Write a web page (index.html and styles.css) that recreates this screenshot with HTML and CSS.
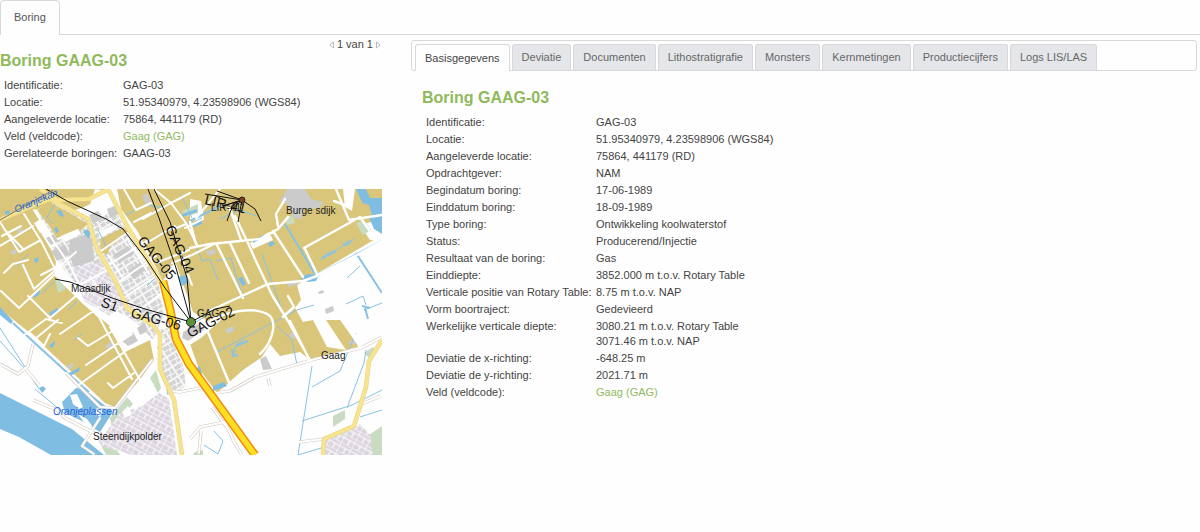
FILE: index.html
```html
<!DOCTYPE html>
<html lang="nl">
<head>
<meta charset="utf-8">
<title>Boring GAAG-03</title>
<link rel="stylesheet" href="styles.css">
</head>
<body>
<nav class="main-tabs"><button class="main-tab" type="button">Boring</button></nav>
<main class="layout">
  <section class="summary">
    <div class="pager">
      <button class="pager-button" type="button" aria-label="Vorige"><svg width="5" height="8" viewBox="0 0 5 8"><path d="M4.5 1v6L.8 4z"/></svg></button>
      <span>1 van 1</span>
      <button class="pager-button" type="button" aria-label="Volgende"><svg width="5" height="8" viewBox="0 0 5 8"><path d="M.5 1v6l3.700-3z"/></svg></button>
    </div>
    <h2 class="title">Boring GAAG-03</h2>
    <table class="facts facts-short">
      <tr><th scope="row">Identificatie:</th><td>GAG-03</td></tr>
      <tr><th scope="row">Locatie:</th><td>51.95340979, 4.23598906 (WGS84)</td></tr>
      <tr><th scope="row">Aangeleverde locatie:</th><td>75864, 441179 (RD)</td></tr>
      <tr><th scope="row">Veld (veldcode):</th><td><a href="#gaag">Gaag (GAG)</a></td></tr>
      <tr><th scope="row">Gerelateerde boringen:</th><td>GAAG-03</td></tr>
    </table>
    <svg class="map" viewBox="0 0 382 266" role="img" aria-label="Kaart van de boring">
      <defs>
        <pattern id="houses" width="13" height="11" patternUnits="userSpaceOnUse" patternTransform="rotate(-32)">
          <rect width="13" height="11" fill="#f6f6f6"/><path d="M1 1h7v4H1zM9 1h3v5H9zM1 6h5v4H1zM7 7h5v3H7z" fill="#d4d4d4"/>
        </pattern>
        <pattern id="suburb" width="12" height="9" patternUnits="userSpaceOnUse" patternTransform="rotate(28)">
          <rect width="12" height="9" fill="#dcd5df"/><path d="M0 0h12M0 0v9M7 4v5M0 4h12" fill="none" stroke="#fff" stroke-width="1.200"/>
        </pattern>
      </defs>
      <rect width="382" height="266" fill="#fefefe"/>
      <!-- greenhouse land -->
      <g fill="#d9c67b">
        <path d="M0 0H106L98 14 68 23 55 13 35 21 56 73 54 86 83 115 110 137 125 163 150 151 154 171 138 193 115 218 105 214 30 144 0 120z"/>
        <path d="M117 0H382V46L313 87 297 96 301 111 295 119 303 133 313 131 327 158 346 161 326 131 340 131 360 157 310 171 300 163 280 167 270 155 262 168 243 181 217 204 199 180 190 155 192 121 174 74 163 92 138 43 121 20z"/>
      </g>
      <g fill="#fefefe">
        <path d="M34 34l7-4 6 6-7 8zM250 54l19-11 4 8-20 9zM343 0h12l-3 22-7-4zM190 10l11 2 3 18-14 2zM360 36l22-6v21h-12z"/>
        <path d="M95 0l13 2 10 19-25 13-20-10 17-9z"/>
      </g>
      <path d="M69 20L96 34 113 18 132 51 158 92 164 125 153 151 136 133 108 117 72 91 60 75 51 55 39 24z" fill="url(#houses)"/>
      <path d="M37 21L50 13 68 23 88 35 80 42 58 51 50 38z" fill="#d9c67b"/>
      <path d="M61 47l17-7 3 5-16 8zM36 36l8-4 5 9 8 16-7 2z" fill="#fefefe"/>
      <path d="M100 50l24-12 5 5-18 14-4 9-6-3z" fill="#d9c67b"/>
      <path d="M98 43l16-7 3 4-17 9zM168 78l8-3 17 48 16 10 14-4-22 20-16 10-9-11 9-18z" fill="#fefefe"/>
      <path d="M72 80L106 72 117 94 124 111 110 127 84 112z" fill="url(#suburb)"/>
      <g fill="#cbcbcb">
        <path d="M70 51l16-6 6 5 2 22-21 6-4-17zM46 49l8-4 4 7-7 4zM51 62l14-6 5 9-13 7zM107 20l10-4 4 8-11 5zM89 26l9-4 5 7-10 6zM113 66l15-9 6 8-15 9zM128 82l14-10 5 8-14 10zM287 0h18l6 10 12 3-3 6-16 1-2 10-8-1-6-13-8-4zM183 143l15-8 7 5-17 12-6-3zM260 170l6-3 6 13-9 1zM137 139l8-5 3 8-8 4zM122 152l11-9 5 9-10 5z"/>
        <path d="M142 7l5-3 4 9-5 3zM17 41l4-2 3 4-5 2zM10 63l5-3 2 4-4 2zM105 157l6-4 3 5-5 3zM67 177l5-3 2 3-5 4zM206 62l8-2 2 4-8 3zM287 95l10-5 1 5-9 3zM225 141l8-4 2 4-7 4zM325 120l8-3 1 5-8 3zM289 145l7-3 2 5-6 3zM318 103l5-2 1 3-5 1zM348 153l8-4 1 5-6 2z"/>
      </g>
      <g fill="#c9dcc1">
        <path d="M55 90l5-1 6 11-8 4zM182 22l16-7v9l-13 4zM285 29l7-3 3 8-8 2zM356 34l8-3 7 10-8 5zM150 189l6-8 5 18-3 5zM110 229l17-21 6 7-13 14-8 9zM165 145l6 2 5 14-5 2zM98 250l12 5 11 11H106zM333 227l12-6v9l-12 8zM369 246l13-9v29h-13zM364 164l9-6 3 4-6 8zM195 263l8-2v5h-10z"/>
      </g>
      <!-- water -->
      <g fill="#80bde2">
        <path d="M0 204L30 219 72 240 104 266H51L19 248 0 240z"/>
        <path d="M62 213l14-14 8 1 29 23-6 9-7 11-18-11-17-8zM39 199l4-2 3 3-4 4zM0 118l13 14-2 3-11-9zM356 0h10l4 9h12v36l-8-5-6-14z"/>
        <path d="M300 89l8-4 11 1-3 6-8 1zM83 43l4-3 4 4-2 6zM178 88l7-2 4 7-7 4zM190 36l12-8v7l-12 4zM182 25l15-5v3l-14 5z"/>
        <path d="M238 90l4-2 4 7-3 2zM49 157l5-5 1 3-3 4zM67 185l13-7-1 4-10 6zM4 23l5-2 1 4-4 1zM34 70l5-2-1 5-3 1zM54 39l3-1 2 5-3 1zM56 22l5-1 3 6-3 1zM49 124l8-5 2 3-8 5zM33 104l7-3-1 5-6 3zM195 180l5-3 4 17-4-2zM213 197l11-4 3 4-14 5zM268 54l5-2 2 3-5 3z"/>
      </g>
      <path d="M374 1h8v8h-9zM362 14l7 2 3 10-7 2z" fill="#d9c67b"/>
      <path d="M70 206l7-1 6 13-4 2-6-5zM78 225l9 5 6 8-7-2zM97 219l6 2-3 7-5-4z" fill="#fff"/>
      <g fill="none" stroke="#89c2e3">
        <path stroke-width="2" d="M13 134L73 189 89 203M285 35l30 50M315 87l67-35M356 64l26 40M190 32l30-15"/>
        <path d="M0 139l39 61M35 200l30 25M0 152l25 28M42 104l13-12M98 41l9 18 6-5M126 26l20-10 18 3M140 58l29-17 20-7M147 97l16-16M193 47l9 25 8-2 8 21M216 72l15-3 12 40M262 65l22 62M320 71l34-21M325 66l8-4M343 55l7-4M360 77l-13 12M346 115l17-8 3 9M364 121l18-7M217 163l80-42 17-5M233 168l3-12 8-5M277 137l15 14 5 25M312 177l-14 89M366 161l-2 13-17 45M302 232l50-16 30-15M360 228l22-7M298 266l30-9M196 133l15-9M169 163l-5 22 4 21M204 256l14 9 5-13-9-10M56 13l-9 15 6 7M9 50l14 10M17 77l11-12M68 121l9-9M74 151l8-6M220 30l19-9 18 6M181 6l11 23M356 144l-16 38-28 16"/>
        <path stroke-width="2" d="M240 106l5 1M253 53l11-6M322 69l14-7M344 57l7-4M232 160l1 7 5-1M236 157l12-5M365 119l3 11M362 117l8 2"/>
      </g>
      <path d="M104 258l-5-5 20-28 23-8 17-13 10 6 8 56h-45z" fill="url(#suburb)"/>
      <path d="M323 266l1-18 18-5 18-8 10 11 3 20z" fill="url(#suburb)"/>
      <path d="M157 158l13-8 13 26 3 21-12 8-10-19zM160 140l11-1 3 16-9-1z" fill="url(#houses)"/>
      <g fill="#fff"><path d="M137 204l9-14 8 5-6 15zM133 206l4-3 4 13-6 5zM122 223l6-6 4 8-7 4z"/></g>
      <!-- minor roads -->
      <path fill="none" stroke="#d0c8be" stroke-width="3.200" stroke-linejoin="round" d="M0 175l18 10 10-8 5-22M25 179l14 17M66 184l34 34 15 1 37-48M216 204l14-2 25-14 60-18 46-11 21-11M170 202l10 1 25-5M100 229l-18 28 12 8M190 250l10-12 25-5M199 264l2-22M225 233l9 20 8 13M299 253l25-3M361 215l20-8M33 211l24 10 8 8 35 18M268 189l2 8M212 218l18 25"/>
      <g fill="none" stroke="#fff" stroke-width="2" stroke-linejoin="round" stroke-linecap="round">
        <path d="M0 175l18 10 10-8 5-22M25 179l14 17M66 184l34 34 15 1 37-48M216 204l14-2 25-14 60-18 46-11 21-11M170 202l10 1 25-5M100 229l-18 28 12 8M190 250l10-12 25-5M199 264l2-22M225 233l9 20 8 13M299 253l25-3M361 215l20-8M33 211l24 10 8 8 35 18M268 189l2 8M212 218l18 25"/>
        <path d="M24 25l17 27 20 40 38 36 33 62M0 33l19 30M4 40l20 21M2 47l19-10M0 57l33-20M19 63l20-11M4 84l9-9 15-4M23 76l11 24 42-37M41 86l21-11M1 102l18 17 35-33M28 107l22 22 27-23M23 147l23-17 16 4M30 144l14 13 6-12M60 145l39-27M80 195l43-31M86 176l46-31M78 149l10 8 36-22M108 194l5 5 21-15M110 138l30 53M35 150l23-19"/>
        <path d="M34 21l20 32 15 22 15 30M58 50l20-9M76 98l35-19M90 88l20 25M101 62l26-18M104 79l44-28M117 94l39-27M125 108l33-22M139 121l23-17M108 66l14 22M127 49l22 36"/>
        <path d="M190 59l20-4 30-3 20-2 18-10 10-12M235 27l13 27 7 16 17 36 16 26 22 39M190 33l6 22M217 56l26 53M230 54l19 40M273 42l30 46M305 60l12 25M304 59l56-31 14 20M317 86l40-20 25-14M209 122l59-27 35-3 14-5M205 136l25 60M229 17l12 34M336 0l13 31 33-5M278 37l-2-12 9-15M348 17l-14-5M205 135c20-13 51-19 65-8 8 10 0 29-10 38M290 132l20 40M320 133l9 18M342 131l19 28M283 128l11-10-6-11M330 129l14-10 16 40" stroke-width="2.400"/>
        <path d="M124 0l12 21 15-7M134 33l17-9M145 55l30-18M134 59l10 13M156 74l33-13M154 0l17 14 15 20 11 22M143 30l28-16 19-10M174 40l12-5M172 74l20-8 22-11M180 64l12 32M220 0l-12 15-12 14M185 39l18-9"/>
      </g>
      <!-- yellow main roads -->
      <g fill="none" stroke-linejoin="round">
        <g stroke="#e6d28c" stroke-width="4.500"><path d="M0 31L37 15 50 10 88 30 97 60 115 91 127 119 153 136 160 146 160 180 174 211 182 266M40 0l17 11 32-1 18-9"/><path d="M108 0l19 37 34 56M382 151l-13 21-3 26-12 39-30 13-1 16"/></g>
        <g stroke="#f7e48e" stroke-width="3.500"><path d="M0 31L37 15 50 10 88 30 97 60 115 91 127 119 153 136 160 146 160 180 174 211 182 266M40 0l17 11 32-1 18-9"/><path d="M108 0l19 37 34 56M382 151l-13 21-3 26-12 39-30 13-1 16"/></g>
        <path stroke="#ef8b16" stroke-width="8.500" d="M163 92l7 28 6 30 13 25 66 91"/>
        <path stroke="#fcdf20" stroke-width="5.500" d="M163 92l7 28 6 30 13 25 66 91"/>
      </g>
      <!-- well paths -->
      <g fill="none" stroke="#111">
        <path d="M46 0L67 12 106 30 123 40 146 70 165 99 191 133M55 90l15 3 45 17 30 10 46 13M148 0l11 29 17 50 15 54M154 0l16 33 17 56 4 44M191 133l24-13 15-3"/>
        <path d="M205 5l37 6 13 9 6 12M217 2l25 9-19 6 19-6-4 22M242 11l-11 10-4 11M214 6l12 6"/>
      </g>
      <path d="M0 31L53 1" stroke="#777" fill="none"/>
      <g class="map-name">
        <text x="71" y="103">Maasdijk</text><text x="286" y="25">Burge sdijk</text><text x="321" y="170">Gaag</text><text x="93" y="251">Steendijkpolder</text><text x="197" y="128">GAG</text><text x="211" y="22">LIR-41</text>
      </g>
      <g class="map-water"><text x="53" y="226">Oranjeplassen</text><text transform="translate(16 24) rotate(-23)">Oranjekan</text></g>
      <g class="map-well">
        <text transform="translate(204 15) rotate(13)">LIR-41</text>
        <text transform="translate(165 39) rotate(66)">GAG-04</text>
        <text transform="translate(137 52) rotate(51)">GAG-05</text>
        <text transform="translate(130 128) rotate(15)">GAG-06</text>
        <text transform="translate(190 149) rotate(-27)">GAG-02</text>
        <text transform="translate(100 117) rotate(20)">S1</text>
      </g>
      <circle cx="191" cy="133" r="4.500" fill="#5d9138" stroke="#222"/>
      <circle cx="242" cy="11" r="3" fill="#7d3b1c" stroke="#222"/>
    </svg>
  </section>
  <section class="details">
    <div class="sub-tabs" role="tablist">
      <button class="sub-tab sub-tab-active" type="button" role="tab" aria-selected="true">Basisgegevens</button>
      <button class="sub-tab" type="button" role="tab">Deviatie</button>
      <button class="sub-tab" type="button" role="tab">Documenten</button>
      <button class="sub-tab" type="button" role="tab">Lithostratigrafie</button>
      <button class="sub-tab" type="button" role="tab">Monsters</button>
      <button class="sub-tab" type="button" role="tab">Kernmetingen</button>
      <button class="sub-tab" type="button" role="tab">Productiecijfers</button>
      <button class="sub-tab" type="button" role="tab">Logs LIS/LAS</button>
    </div>
    <div class="panel">
      <h2 class="title">Boring GAAG-03</h2>
      <table class="facts facts-long">
        <tr><th scope="row">Identificatie:</th><td>GAG-03</td></tr>
        <tr><th scope="row">Locatie:</th><td>51.95340979, 4.23598906 (WGS84)</td></tr>
        <tr><th scope="row">Aangeleverde locatie:</th><td>75864, 441179 (RD)</td></tr>
        <tr><th scope="row">Opdrachtgever:</th><td>NAM</td></tr>
        <tr><th scope="row">Begindatum boring:</th><td>17-06-1989</td></tr>
        <tr><th scope="row">Einddatum boring:</th><td>18-09-1989</td></tr>
        <tr><th scope="row">Type boring:</th><td>Ontwikkeling koolwaterstof</td></tr>
        <tr><th scope="row">Status:</th><td>Producerend/Injectie</td></tr>
        <tr><th scope="row">Resultaat van de boring:</th><td>Gas</td></tr>
        <tr><th scope="row">Einddiepte:</th><td>3852.000 m t.o.v. Rotary Table</td></tr>
        <tr><th scope="row">Verticale positie van Rotary Table:</th><td>8.75 m t.o.v. NAP</td></tr>
        <tr><th scope="row">Vorm boortraject:</th><td>Gedevieerd</td></tr>
        <tr><th scope="row">Werkelijke verticale diepte:</th><td>3080.21 m t.o.v. Rotary Table<br>3071.46 m t.o.v. NAP</td></tr>
        <tr><th scope="row">Deviatie de x-richting:</th><td>-648.25 m</td></tr>
        <tr><th scope="row">Deviatie de y-richting:</th><td>2021.71 m</td></tr>
        <tr><th scope="row">Veld (veldcode):</th><td><a href="#gaag">Gaag (GAG)</a></td></tr>
      </table>
    </div>
  </section>
</main>
</body>
</html>
```
FILE: styles.css
```css
* { box-sizing: border-box; }
body {
  margin: 0;
  background: #fefefe;
  color: #444;
  font: 11px/15px "Liberation Sans", Arial, sans-serif;
}
button {
  margin: 0;
  font: inherit;
  color: inherit;
  cursor: pointer;
}
.main-tabs {
  display: flex;
  border-bottom: 1px solid #d8d8d8;
}
.main-tab {
  margin-bottom: -1px;
  padding: 9px 13px 10px;
  border: 1px solid #d8d8d8;
  border-bottom: 0;
  border-radius: 4px 4px 0 0;
  background: #fefefe;
  color: #555;
}
.layout {
  display: grid;
  grid-template-columns: 382fr 786fr;
  gap: 29px;
  padding-right: 3px;
}
.pager {
  display: flex;
  justify-content: flex-end;
  align-items: center;
  gap: 3px;
  padding: 2px 1px 0;
}
.pager-button {
  display: flex;
  padding: 0;
  border: 0;
  background: none;
}
.pager-button path {
  fill: none;
  stroke: #bbb;
}
.title {
  margin: 0;
  color: #8fba5c;
  font-size: 16px;
  line-height: 18px;
}
.facts {
  margin: 7px 0 0 4px;
  border-collapse: collapse;
}
.facts th,
.facts td {
  padding: 1px 0;
  text-align: left;
  vertical-align: top;
  font-weight: normal;
}
.facts-short th { width: 119px; }
.facts-long th { width: 170px; }
.facts th { white-space: nowrap; }
.facts a {
  color: #8fba5c;
  text-decoration: none;
}
.map {
  display: block;
  width: 100%;
  margin-top: 27px;
}
.map-name { font-size: 10px; fill: #222; }
.map-water { font-size: 10px; font-style: italic; fill: #2764d8; }
.map-well { font-size: 14px; fill: #111; }
.details { padding-top: 5px; }
.sub-tabs {
  display: flex;
  gap: 2px;
  padding: 3px 3px 0;
  border: 1px solid #d8d8d8;
  border-radius: 3px;
}
.sub-tab {
  padding: 5px 9px;
  border: 1px solid #d8d8d8;
  border-bottom: 0;
  border-radius: 3px 3px 0 0;
  background: #e4e6ea;
  color: #666;
}
.sub-tab-active {
  margin-bottom: -1px;
  background: #fefefe;
  color: #444;
}
.panel { padding: 18px 11px; }
```
